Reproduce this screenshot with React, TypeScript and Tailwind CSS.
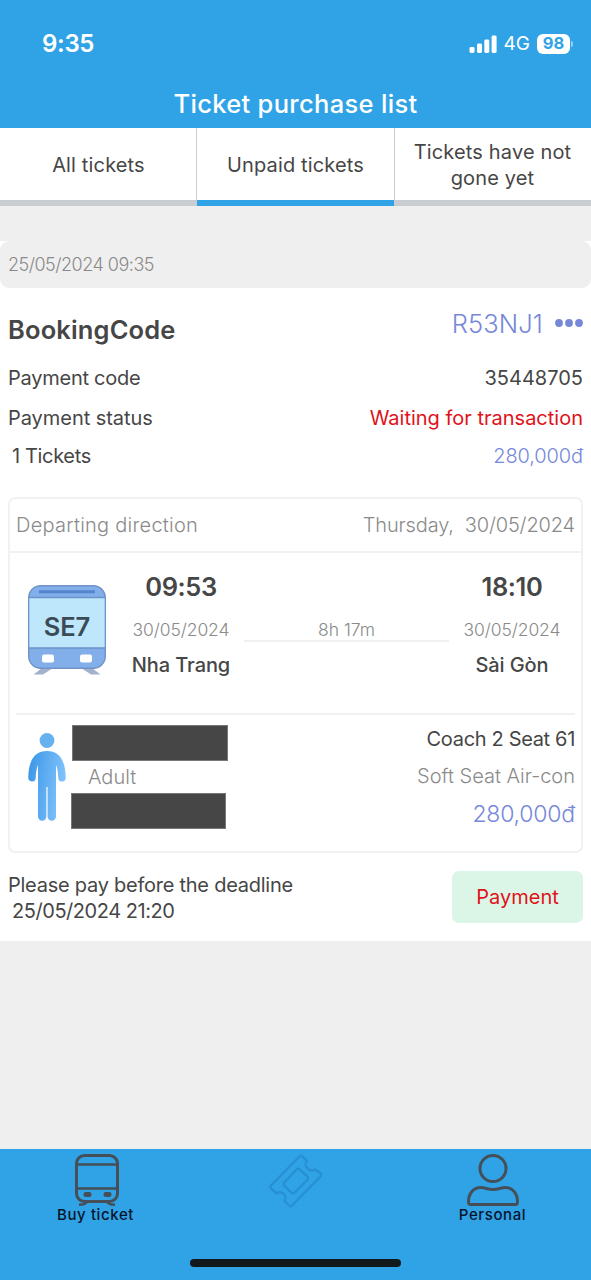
import type { ReactNode } from "react";

const TABS = [
  { label: "All tickets", active: false },
  { label: "Unpaid tickets", active: true },
  { label: "Tickets have not gone yet", active: false },
];

function SignalIcon() {
  return (
    <svg className="h-[18px] w-[28px]" viewBox="0 0 28 18" fill="white" aria-hidden>
      <rect x="0.5" y="12" width="5" height="6" rx="1.4" />
      <rect x="8" y="8.5" width="5" height="9.5" rx="1.4" />
      <rect x="15.3" y="4.5" width="5" height="13.5" rx="1.4" />
      <rect x="22.6" y="0.5" width="5" height="17.5" rx="1.4" />
    </svg>
  );
}

function TrainBadge({ code }: { code: string }) {
  return (
    <div className="relative h-[92px] w-[80px]">
      <svg className="h-full w-full" viewBox="0 0 80 92" aria-hidden>
        <path d="M15 84h11l-10 6.500H6.500zM65 84H54l10 6.500h9.500z" fill="#a3b1cc" />
        <rect x="1.7" y="1.7" width="76.6" height="82.6" rx="12" fill="#82aeea" stroke="#7093c8" strokeWidth="1.4" />
        <rect x="2.4" y="13.6" width="75.2" height="50.4" fill="#bfe7fb" />
        <path d="M2 13.6h76M2 64h76" stroke="#6b92c9" strokeWidth="1.5" />
        <path d="M12 7.7h56" stroke="#5585cb" strokeWidth="3" />
        <rect x="15" y="70.5" width="12" height="8" rx="2" fill="white" />
        <rect x="53" y="70.5" width="12" height="8" rx="2" fill="white" />
      </svg>
      <span className="absolute inset-x-0 top-[27px] text-center text-[25.5px] leading-[32px] font-semibold tracking-[-0.1px] text-[#3a4b57]">
        {code}
      </span>
    </div>
  );
}

function AdultIcon() {
  return (
    <svg className="h-[90px] w-[40px]" viewBox="0 0 40 90" aria-hidden>
      <defs>
        <linearGradient id="adult-fill" x1="0" y1="0.3" x2="1" y2="0.55">
          <stop offset="0" stopColor="#3d98e8" />
          <stop offset="1" stopColor="#85c5fc" />
        </linearGradient>
      </defs>
      <circle cx="20" cy="8.5" r="7.4" fill="#66b2f0" />
      <path
        d="M20 19C8 19 1.5 28 1.300 45.500a3.700 3.700 0 0 0 7.400.4c.3-6 .9-10 2.300-13V84.500a4.200 4.200 0 0 0 8.400 0V55h1.200v29.500a4.200 4.200 0 0 0 8.400 0V33c1.400 3 2 7 2.300 13a3.700 3.700 0 0 0 7.400-.4C38.500 28 32 19 20 19z"
        fill="url(#adult-fill)"
      />
    </svg>
  );
}

function TrainIcon() {
  return (
    <svg className="h-[53px] w-[46px]" viewBox="0 0 46 53" fill="none" stroke="#464f58" strokeWidth="3" aria-hidden>
      <rect x="2.500" y="1.500" width="41" height="46" rx="8" />
      <path d="M2 10.500h42M2 34.500h42" strokeWidth="2.600" />
      <rect x="9.500" y="38" width="8" height="5" rx="2.200" fill="#464f58" stroke="none" />
      <rect x="29.500" y="38" width="8" height="5" rx="2.200" fill="#464f58" stroke="none" />
      <path d="M12.500 47.500c-.5 2.500-3 3.300-7.500 3.300M33.500 47.500c.5 2.500 3 3.300 7.500 3.300" strokeWidth="2.600" />
    </svg>
  );
}

function TicketIcon() {
  return (
    <svg className="h-[54px] w-[54px]" viewBox="0 0 54 54" fill="none" stroke="#2790d3" strokeWidth="2.400" strokeLinejoin="round" aria-hidden>
      <path d="M30.500 2.500a2 2 0 0 1 3 0L38 7.200a4.500 4.500 0 0 0 1 7.300 5 5 0 0 0 7.200.8l5.300 4.200a2 2 0 0 1 0 3L23 51.500a2 2 0 0 1-3 0l-4.500-5a4.800 4.800 0 0 0-.8-6.500 4.800 4.800 0 0 0-7-.5L2 34.500a2 2 0 0 1 0-3z" />
      <path d="M27.500 15.500a2 2 0 0 1 3 0l8 7a2 2 0 0 1 0 3L25.500 38.800a2 2 0 0 1-3 0l-7.300-7.300a2 2 0 0 1 0-3z" />
    </svg>
  );
}

function PersonIcon() {
  return (
    <svg className="h-[52px] w-[52px]" viewBox="0 0 52 52" fill="none" stroke="#464f58" strokeWidth="3" aria-hidden>
      <circle cx="26" cy="14.500" r="13" />
      <path d="M1.500 47.500C1.500 40 6 33.500 13.500 33.500c5 0 7 2 12.500 2s7.500-2 12.500-2c7.500 0 12 6.500 12 14 0 2-.5 3-2 3h-45c-1.500 0-2-1-2-3z" />
    </svg>
  );
}

function InfoRow({
  label,
  children,
  className = "",
}: {
  label: ReactNode;
  children: ReactNode;
  className?: string;
}) {
  return (
    <div className={`flex items-center justify-between ${className}`.trim()}>
      <span>{label}</span>
      {children}
    </div>
  );
}

function Stop({ time, date, place }: { time: string; date: string; place: string }) {
  return (
    <div className="flex flex-col items-center">
      <span className="h-[32px] text-[25.5px] leading-[32px] font-semibold tracking-[-0.4px]">{time}</span>
      <span className="mt-[16px] h-[22px] text-[17.5px] leading-[22px] font-light tracking-[-0.1px] text-[#8a8a8a]">
        {date}
      </span>
      <span className="mt-[11px] h-[26px] text-[20px] leading-[26px] font-medium tracking-[-0.1px]">{place}</span>
    </div>
  );
}

export default function App() {
  return (
    <div className="flex h-[1280px] w-[591px] flex-col overflow-hidden bg-[#efefef] font-['Inter',sans-serif] whitespace-nowrap text-[#464646]">
      <header className="h-[128px] bg-[#30a3e6] text-white">
        <div className="flex h-[87px] items-center justify-between pr-[18px] pl-[42px]">
          <span className="text-[24px] font-semibold tracking-[-0.3px]">9:35</span>
          <div className="flex items-center">
            <SignalIcon />
            <span className="mt-px ml-[7px] text-[19px]">4G</span>
            <span className="ml-[7px] flex h-[20px] w-[33px] items-center justify-center rounded-[6px] bg-white text-[16.5px] font-bold text-[#30a3e6]">
              98
            </span>
            <span className="ml-px h-[6px] w-[2px] rounded-r-full bg-white/50" />
          </div>
        </div>
        <h1 className="flex h-[34px] items-center justify-center text-[25.5px] font-medium tracking-[0.32px]">
          Ticket purchase list
        </h1>
      </header>

      <nav className="grid h-[78px] grid-cols-3">
        {TABS.map(({ label, active }) => (
          <button
            key={label}
            className={`flex items-center justify-center border-b-[6px] bg-white px-4 pt-px text-center text-[20px] leading-[26px] tracking-[0.15px] whitespace-normal ${
              active
                ? "relative z-10 border-b-[#30a3e6] shadow-[-1px_0_0_#cccccc,1px_0_0_#cccccc]"
                : "border-b-[#c9cdd1]"
            }`}
          >
            {label}
          </button>
        ))}
      </nav>

      <main className="mt-[35px] h-[700px] bg-white">
        <div className="flex h-[47px] items-center rounded-[9px] bg-[#efefef] px-2 text-[18px] font-light tracking-[-0.5px] text-[#8a8a8a]">
          25/05/2024 09:35
        </div>

        <section className="px-2 pt-[16px] text-[20px]">
          <div className="flex h-[54px] items-start justify-between">
            <h2 className="mt-[10px] text-[25.5px] leading-[32px] font-semibold tracking-[0.15px]">BookingCode</h2>
            <div className="mt-[4px] flex items-center gap-[12px] text-[#7788da]">
              <span className="text-[25.5px] leading-[32px] font-light tracking-[0.1px]">R53NJ1</span>
              <svg className="mb-[3px] h-[8px] w-[28px]" viewBox="0 0 28 8" fill="currentColor" aria-hidden>
                <circle cx="4" cy="4" r="3.900" />
                <circle cx="14" cy="4" r="3.900" />
                <circle cx="24" cy="4" r="3.900" />
              </svg>
            </div>
          </div>
          <InfoRow label={<span className="tracking-[-0.25px]">Payment code</span>} className="h-[40px]">
            <span>35448705</span>
          </InfoRow>
          <InfoRow label={<span className="tracking-[-0.05px]">Payment status</span>} className="h-[40px]">
            <span className="text-[#e0121a]">Waiting for transaction</span>
          </InfoRow>
          <InfoRow label={<span className="pl-1 tracking-[-0.35px]">1 Tickets</span>} className="h-[36px]">
            <span className="font-light tracking-[-0.1px] text-[#7788da]">280,000đ</span>
          </InfoRow>
        </section>

        <section className="mx-2 mt-[23px] h-[356px] rounded-[7px] border-2 border-[#f1f1f1]">
          <div className="flex h-[54px] items-center justify-between border-b-2 border-[#f1f1f1] px-[6px] text-[20px] font-light text-[#8a8a8a]">
            <span className="tracking-[0.25px]">Departing direction</span>
            <span className="tracking-[-0.15px]">
              Thursday,&nbsp; 30/05/2024
            </span>
          </div>

          <div className="mx-[6px] flex h-[162px] items-start border-b-2 border-[#f1f1f1]">
            <div className="mt-[31px] ml-[11px]">
              <TrainBadge code="SE7" />
            </div>
            <div className="mt-[18px] ml-[11px] flex w-[126px] justify-center">
              <Stop time="09:53" date="30/05/2024" place="Nha Trang" />
            </div>
            <div className="mt-[66px] h-[23px] w-[205px] border-b-2 border-[#f1f1f1] text-center text-[17.5px] leading-[22px] font-light text-[#8a8a8a]">
              8h 17m
            </div>
            <div className="mt-[18px] flex w-[126px] justify-center">
              <Stop time="18:10" date="30/05/2024" place="Sài Gòn" />
            </div>
          </div>

          <div className="flex justify-between px-[6px] text-[20px]">
            <div className="flex">
              <div className="mt-[17px] ml-[11px]">
                <AdultIcon />
              </div>
              <div className="mt-[10px] ml-[4px] w-[157px]">
                <div className="ml-px h-[36px] border border-[#777777] bg-[#464646]" />
                <div className="flex h-[32px] items-center pb-px pl-[17px] font-light text-[#8a8a8a]">Adult</div>
                <div className="mr-[2px] h-[36px] border border-[#777777] bg-[#464646]" />
              </div>
            </div>
            <div className="mt-[6px] flex flex-col items-end">
              <span className="h-[36px] leading-[36px] tracking-[-0.33px]">Coach 2 Seat 61</span>
              <span className="h-[38px] leading-[38px] font-light text-[#8a8a8a]">Soft Seat Air-con</span>
              <span className="h-[39px] text-[23px] leading-[39px] font-light tracking-[-0.2px] text-[#7788da]">
                280,000đ
              </span>
            </div>
          </div>
        </section>

        <section className="flex items-start justify-between px-2 pt-[18px] text-[20px]">
          <p className="pt-px leading-[26px]">
            <span className="tracking-[-0.25px]">Please pay before the deadline</span>
            <br />
            <span className="pl-1 tracking-[-0.45px]">25/05/2024 21:20</span>
          </p>
          <button className="h-[52px] w-[131px] rounded-[7px] bg-[#dbf6e7] text-[#e0121a]">Payment</button>
        </section>
      </main>

      <footer className="mt-auto flex h-[131px] flex-col items-center justify-between bg-[#30a3e6] pb-[13px]">
        <div className="grid w-full grid-cols-3 pt-[5px] text-[15px] leading-[16px] font-medium tracking-[0.6px] text-[#07142c]">
          <div className="flex flex-col items-center pr-[6px]">
            <div className="h-[53px] pl-[3px]">
              <TrainIcon />
            </div>
            Buy ticket
          </div>
          <div className="flex justify-center">
            <TicketIcon />
          </div>
          <div className="flex flex-col items-center">
            <div className="h-[53px]">
              <PersonIcon />
            </div>
            Personal
          </div>
        </div>
        <div className="h-[8px] w-[211px] rounded-full bg-[#12191c]" />
      </footer>
    </div>
  );
}
